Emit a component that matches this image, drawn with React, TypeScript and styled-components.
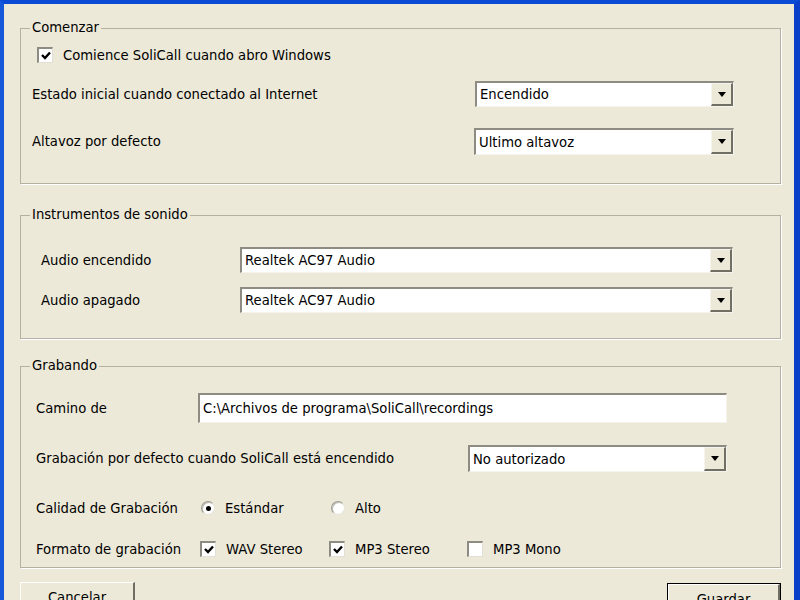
import React from "react";
import styled, { createGlobalStyle } from "styled-components";

const Global = createGlobalStyle`
  html, body { margin: 0; padding: 0; background: #ECE9D8; }
  body { font-family: "DejaVu Sans", "Liberation Sans", sans-serif; font-size: 13.2px; color: #000; }
`;

const Window = styled.div`
  box-sizing: border-box;
  width: 800px;
  height: 600px;
  overflow: hidden;
  background: #ECE9D8;
  border-top: 4px solid #0A4BD6;
  border-left: 4px solid #1559DA;
  border-right: 6px solid #0A3FC8;
  padding: 0 13px 0 16px;
  display: flex;
  flex-direction: column;
`;

const Group = styled.fieldset<{ $mt: number; $pl: number; $pr: number; $pb: number }>`
  margin: ${(p) => p.$mt}px 0 0 0;
  min-width: 0;
  padding: 0 ${(p) => p.$pr}px ${(p) => p.$pb}px ${(p) => p.$pl}px;
  border: 1px solid #B4B1A3;
  box-shadow: 1px 1px 0 #FFFFFF;
  display: flex;
  flex-direction: column;
`;

const Legend = styled.legend<{ $ml?: number }>`
  margin-left: ${(p) => p.$ml ?? 0}px;
  padding: 0 2px;
  line-height: 18px;
  height: 18px;
`;

const Row = styled.div<{ $mt: number; $h: number; $pl?: number }>`
  display: flex;
  align-items: center;
  margin-top: ${(p) => p.$mt}px;
  height: ${(p) => p.$h}px;
  padding-left: ${(p) => p.$pl ?? 0}px;
`;

const Label = styled.span<{ $w?: number }>`
  flex: none;
  width: ${(p) => (p.$w ? `${p.$w}px` : "auto")};
  white-space: nowrap;
`;

const ComboBox = styled.div<{ $w?: number }>`
  box-sizing: border-box;
  display: flex;
  align-items: stretch;
  height: 100%;
  ${(p) => (p.$w ? `width: ${p.$w}px; margin-left: auto;` : "flex: 1;")}
  background: #fff;
  border-top: 2px solid #8E8C82;
  border-left: 2px solid #8E8C82;
  border-right: 1px solid #F4F3EE;
  border-bottom: 1px solid #F4F3EE;
`;

const ComboText = styled.span`
  flex: 1;
  display: flex;
  align-items: center;
  padding-left: 3px;
  white-space: nowrap;
  overflow: hidden;
`;

const ComboButton = styled.span`
  box-sizing: border-box;
  width: 22px;
  flex: none;
  background: #ECE9D8;
  border-top: 1px solid #F5F4EE;
  border-left: 1px solid #F5F4EE;
  border-right: 2px solid #716F64;
  border-bottom: 2px solid #716F64;
  display: flex;
  align-items: center;
  justify-content: center;
`;

const Arrow = styled.span`
  width: 0;
  height: 0;
  border-left: 4.5px solid transparent;
  border-right: 4.5px solid transparent;
  border-top: 5px solid #000;
`;

const TextBox = styled.div`
  box-sizing: border-box;
  flex: 1;
  height: 100%;
  background: #fff;
  border-top: 2px solid #8E8C82;
  border-left: 2px solid #8E8C82;
  border-right: 1px solid #F4F3EE;
  border-bottom: 1px solid #F4F3EE;
  display: flex;
  align-items: center;
  padding-left: 3px;
  white-space: nowrap;
`;

const Option = styled.label<{ $w?: number }>`
  display: flex;
  align-items: center;
  flex: none;
  width: ${(p) => (p.$w ? `${p.$w}px` : "auto")};
  white-space: nowrap;
`;

const Box = styled.span`
  box-sizing: border-box;
  width: 16px;
  height: 16px;
  flex: none;
  background: #fff;
  border-top: 2px solid #8E8C82;
  border-left: 2px solid #8E8C82;
  border-right: 1px solid #E2E0D6;
  border-bottom: 1px solid #E2E0D6;
  display: flex;
  align-items: center;
  justify-content: center;
  margin-right: 10px;
`;

const Radio = styled.span`
  box-sizing: border-box;
  width: 14px;
  height: 14px;
  flex: none;
  border-radius: 50%;
  background: #fff;
  border: 1px solid #9E9C92;
  border-right-color: #E6E4DA;
  border-bottom-color: #E6E4DA;
  box-shadow: inset 1px 1px 0 #BEBCB2;
  display: flex;
  align-items: center;
  justify-content: center;
  margin-right: 10px;
`;

const Dot = styled.span`
  width: 5px;
  height: 5px;
  border-radius: 50%;
  background: #000;
`;

const Buttons = styled.div`
  display: flex;
  justify-content: space-between;
  align-items: flex-start;
  margin-top: 13px;
`;

const Button = styled.button<{ $w: number; $default?: boolean }>`
  box-sizing: border-box;
  width: ${(p) => p.$w}px;
  height: 32px;
  flex: none;
  font: inherit;
  color: #000;
  background: #ECE9D8;
  padding: 0;
  border-top: 1px solid #FFFFFF;
  border-left: 1px solid #FFFFFF;
  border-right: 2px solid #716F64;
  border-bottom: 2px solid #716F64;
  ${(p) => (p.$default ? "outline: 1px solid #000; margin-top: 3px; margin-right: 1px;" : "margin-top: 1px;")}
`;

const Check = () => (
  <svg width="10" height="9" viewBox="0 0 10 9">
    <path d="M1 4 L4 7 L9 1.5" stroke="#000" strokeWidth="2.4" fill="none" />
  </svg>
);

const Combo = ({ text, w }: { text: string; w?: number }) => (
  <ComboBox $w={w}>
    <ComboText>{text}</ComboText>
    <ComboButton>
      <Arrow />
    </ComboButton>
  </ComboBox>
);

export default function App() {
  return (
    <>
      <Global />
      <Window>
        <Group $mt={15} $pl={11} $pr={46} $pb={28}>
          <Legend $ml={-2}>Comenzar</Legend>
          <Row $mt={8} $h={20} $pl={5}>
            <Option>
              <Box>
                <Check />
              </Box>
              Comience SoliCall cuando abro Windows
            </Option>
          </Row>
          <Row $mt={16} $h={26}>
            <Label>Estado inicial cuando conectado al Internet</Label>
            <Combo text="Encendido" w={259} />
          </Row>
          <Row $mt={21} $h={27}>
            <Label>Altavoz por defecto</Label>
            <Combo text="Ultimo altavoz" w={260} />
          </Row>
        </Group>

        <Group $mt={22} $pl={20} $pr={47} $pb={25}>
          <Legend $ml={-11}>Instrumentos de sonido</Legend>
          <Row $mt={23} $h={26}>
            <Label $w={199}>Audio encendido</Label>
            <Combo text="Realtek AC97 Audio" />
          </Row>
          <Row $mt={14} $h={26}>
            <Label $w={199}>Audio apagado</Label>
            <Combo text="Realtek AC97 Audio" />
          </Row>
        </Group>

        <Group $mt={18} $pl={15} $pr={53} $pb={8}>
          <Legend $ml={-6}>Grabando</Legend>
          <Row $mt={18} $h={30}>
            <Label $w={162}>Camino de</Label>
            <TextBox>C:\Archivos de programa\SoliCall\recordings</TextBox>
          </Row>
          <Row $mt={22} $h={27}>
            <Label>Grabación por defecto cuando SoliCall está encendido</Label>
            <Combo text="No autorizado" w={259} />
          </Row>
          <Row $mt={26} $h={20}>
            <Label $w={165}>Calidad de Grabación</Label>
            <Option $w={130}>
              <Radio>
                <Dot />
              </Radio>
              Estándar
            </Option>
            <Option>
              <Radio />
              Alto
            </Option>
          </Row>
          <Row $mt={21} $h={20}>
            <Label $w={164}>Formato de grabación</Label>
            <Option $w={129}>
              <Box>
                <Check />
              </Box>
              WAV Stereo
            </Option>
            <Option $w={138}>
              <Box>
                <Check />
              </Box>
              MP3 Stereo
            </Option>
            <Option>
              <Box />
              MP3 Mono
            </Option>
          </Row>
        </Group>

        <Buttons>
          <Button $w={115}>Cancelar</Button>
          <Button $w={112} $default>
            Guardar
          </Button>
        </Buttons>
      </Window>
    </>
  );
}
